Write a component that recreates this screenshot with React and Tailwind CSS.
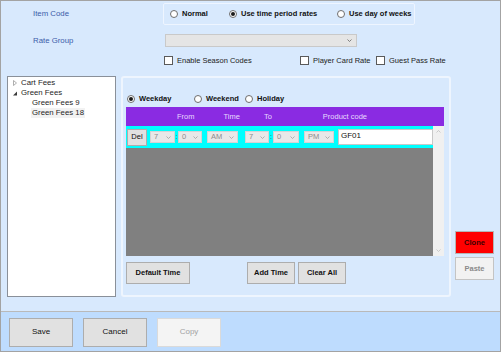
import React from 'react';

const Radio = ({ checked, label, className = '' }) => (
  <div className={`flex items-center ${className}`}>
    <span className="w-[8px] h-[8px] rounded-full border border-[#6e6e6e] bg-white flex items-center justify-center shrink-0">
      {checked && <span className="w-[4px] h-[4px] rounded-full bg-[#1a1a1a]" />}
    </span>
    <span className="ml-[4px] font-bold text-[#111]">{label}</span>
  </div>
);

const Check = ({ label, className = '' }) => (
  <div className={`flex items-center ${className}`}>
    <span className="w-[9px] h-[9px] border border-[#5a5a5a] bg-white shrink-0" />
    <span className="ml-[4px] text-[#222]">{label}</span>
  </div>
);

const Chevron = ({ className = '' }) => (
  <svg width="5" height="3" viewBox="0 0 5 3" className={className}>
    <path d="M0.5 0.5 L2.5 2.5 L4.5 0.5" stroke="currentColor" fill="none" strokeWidth="0.8" />
  </svg>
);

const Combo = ({ value, w }) => (
  <div className={`${w} h-[12px] bg-[#e8e8e8] border border-[#d4d4d4] flex items-center justify-between px-[3px] text-[#8c8c8c]`}>
    <span>{value}</span>
    <Chevron className="text-[#a0a0a0]" />
  </div>
);

const Btn = ({ children, w, h = 'h-[22px]', className = '' }) => (
  <button className={`${w} ${h} border border-[#adadad] bg-[#e1e1e1] flex items-center justify-center text-[#111] ${className}`}>
    {children}
  </button>
);

export default function App() {
  return (
    <div className="w-[501px] h-[352px] border border-[#a3a3a3] bg-[#d8e9fd] flex flex-col font-['Liberation_Sans',Arial,sans-serif] text-[7.5px] leading-none overflow-hidden whitespace-nowrap">
      <div className="flex-1 flex flex-col">
        {/* Item Code */}
        <div className="mt-[2px] h-[22px] flex items-center pl-[32px]">
          <span className="w-[130px] text-[#3b5ca9] text-[7.8px]">Item Code</span>
          <div className="w-[252px] h-[22px] border border-[#eef5ff] rounded-[2px] flex items-center pl-[6px]">
            <Radio label="Normal" className="w-[59px]" />
            <Radio checked label="Use time period rates" className="w-[108px]" />
            <Radio label="Use day of weeks" />
          </div>
        </div>

        {/* Rate Group */}
        <div className="mt-[9px] h-[13px] flex items-center pl-[32px]">
          <span className="w-[132px] text-[#3b5ca9] text-[7.8px]">Rate Group</span>
          <div className="w-[192px] h-[13px] bg-[#e5e5e5] border border-[#c9c9c9] flex items-center justify-end pr-[4px]">
            <Chevron className="text-[#666]" />
          </div>
        </div>

        {/* Checkboxes */}
        <div className="mt-[9px] h-[9px] flex items-center pl-[163px]">
          <Check label="Enable Season Codes" className="w-[136px]" />
          <Check label="Player Card Rate" className="w-[76px]" />
          <Check label="Guest Pass Rate" />
        </div>

        {/* Main */}
        <div className="mt-[11px] flex pl-[6px]">
          <div className="w-[109px] h-[221px] bg-white border border-[#8a9099] pt-[1px] text-[#1e1e1e] text-[7.8px]">
            <div className="h-[10px] flex items-center pl-[5px]">
              <svg width="4" height="6" viewBox="0 0 4 6"><path d="M0.5 0.5 L3.5 3 L0.5 5.5 Z" fill="none" stroke="#9a9a9a" strokeWidth="0.8" /></svg>
              <span className="ml-[4px]">Cart Fees</span>
            </div>
            <div className="h-[10px] flex items-center pl-[5px]">
              <svg width="4" height="5" viewBox="0 0 4 5"><path d="M4 0.5 L4 4.5 L0 4.5 Z" fill="#3a3a3a" /></svg>
              <span className="ml-[4px]">Green Fees</span>
            </div>
            <div className="h-[10px] flex items-center pl-[24px]">Green Fees 9</div>
            <div className="h-[10px] flex items-center ml-[23px] px-[1px] w-fit bg-[#f2f2f2]">Green Fees 18</div>
          </div>

          <div className="ml-[5px] w-[330px] h-[221px] border-2 border-[#eef5fe] rounded-[3px] pl-[3px] pt-[16px]">
            <div className="h-[10px] flex items-center pl-[1px]">
              <Radio checked label="Weekday" className="w-[67px]" />
              <Radio label="Weekend" className="w-[51px]" />
              <Radio label="Holiday" />
            </div>

            <div className="mt-[3px] w-[318px]">
              <div className="h-[19px] bg-[#8a2be2] flex items-center text-[#e6d9ff]">
                <span className="ml-[51px]">From</span>
                <span className="ml-[29px]">Time</span>
                <span className="ml-[24px]">To</span>
                <span className="ml-[51px]">Product code</span>
              </div>
              <div className="flex">
                <div className="w-[307px]">
                  <div className="h-[22px] bg-[#00ffff] flex items-center pl-[1px]">
                    <Btn w="w-[20px]" h="h-[17px]" className="border-[#a8a8a8]">Del</Btn>
                    <div className="ml-[3px]"><Combo value="7" w="w-[25px]" /></div>
                    <span className="w-[3px] text-center text-[#555]">:</span>
                    <Combo value="0" w="w-[24px]" />
                    <div className="ml-[5px]"><Combo value="AM" w="w-[31px]" /></div>
                    <div className="ml-[7px]"><Combo value="7" w="w-[24px]" /></div>
                    <span className="w-[4px] text-center text-[#555]">:</span>
                    <Combo value="0" w="w-[26px]" />
                    <div className="ml-[5px]"><Combo value="PM" w="w-[30px]" /></div>
                    <div className="ml-[4px] w-[95px] h-[16px] bg-white border border-[#c8c8c8] pl-[2px] pt-[2px] text-[#111] text-[8px]">GF01</div>
                  </div>
                  <div className="h-[108px] bg-[#808080]" />
                </div>
                <div className="w-[11px] h-[130px] bg-[#f0f0f0] flex flex-col items-center justify-between py-[4px]">
                  <Chevron className="text-[#c0c0c0] rotate-180" />
                  <Chevron className="text-[#c0c0c0]" />
                </div>
              </div>
            </div>

            <div className="mt-[6px] flex">
              <Btn w="w-[64px]" className="font-bold">Default Time</Btn>
              <Btn w="w-[48px]" className="font-bold ml-[57px]">Add Time</Btn>
              <Btn w="w-[48px]" className="font-bold ml-[3px]">Clear All</Btn>
            </div>
          </div>

          <div className="ml-[4px] flex flex-col pt-[155px]">
            <button className="w-[39px] h-[23px] bg-[#ff0000] border border-[#b5b5b5] font-bold text-[#3a0000] flex items-center justify-center">Clone</button>
            <button className="mt-[3px] w-[39px] h-[23px] bg-[#f2f2f2] border border-[#c4c4c4] font-bold text-[#8a8a8a] flex items-center justify-center">Paste</button>
          </div>
        </div>
      </div>

      {/* Bottom bar */}
      <div className="h-[40px] border-t border-[#b9b9b9] bg-[#bedcfe] flex items-center pl-[8px] gap-[10px] pt-[1px] text-[8px]">
        <Btn w="w-[64px]" h="h-[29px]" className="bg-[#dddddd]">Save</Btn>
        <Btn w="w-[64px]" h="h-[29px]" className="bg-[#dddddd]">Cancel</Btn>
        <button className="w-[64px] h-[29px] border border-[#dadada] bg-[#f4f4f4] text-[#a3a3a3] flex items-center justify-center">Copy</button>
      </div>
    </div>
  );
}
